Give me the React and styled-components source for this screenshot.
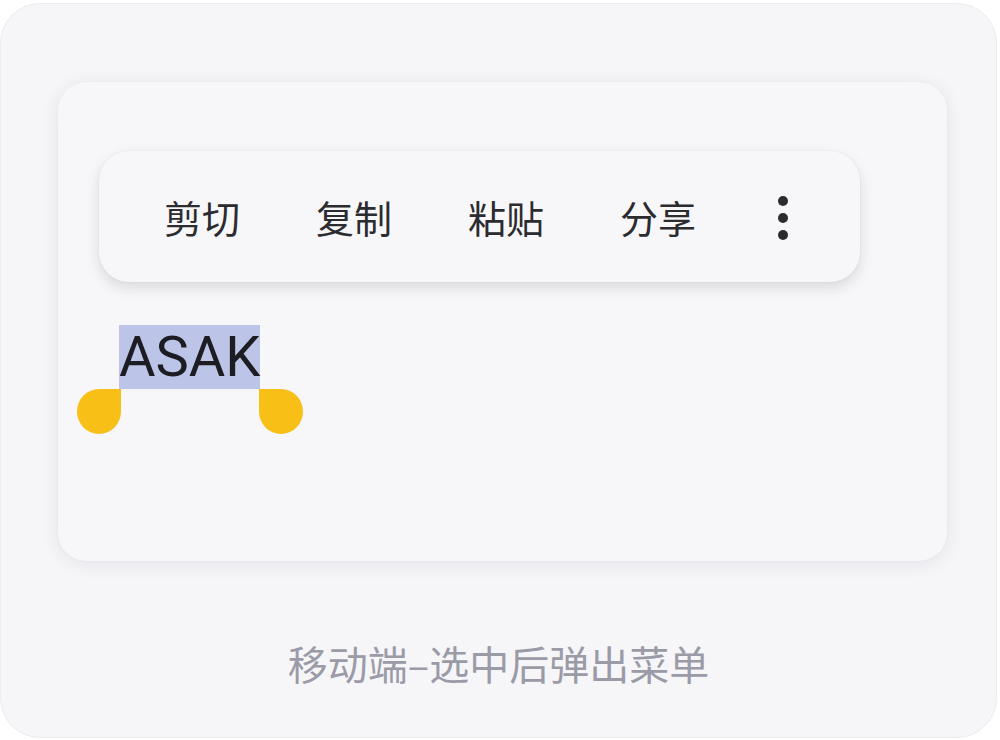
import React from 'react';
import styled, { createGlobalStyle } from 'styled-components';

const GlobalStyle = createGlobalStyle`
    html, body {
        margin: 0;
        padding: 0;
        background: #ffffff;
    }
    body {
        font-family: "Noto Sans", "Noto Sans CJK SC", sans-serif;
    }
`;

const Frame = styled.div`
    box-sizing: border-box;
    width: 997px;
    height: 735px;
    margin: 3px 3px 2px 0;
    padding: 78px 0 0 57px;
    border: 1px solid #ececf0;
    border-radius: 40px;
    background: #f6f6f9;
    display: flex;
    flex-direction: column;
`;

const Card = styled.div`
    box-sizing: border-box;
    width: 889px;
    height: 479px;
    padding: 69px 0 0 41px;
    border-radius: 28px;
    background: #f7f7f9;
    box-shadow: 0 3px 18px rgba(40, 40, 70, 0.09), 0 0 2px rgba(40, 40, 70, 0.05);
`;

const Menu = styled.div`
    box-sizing: border-box;
    width: 761px;
    height: 131px;
    padding-left: 65px;
    display: flex;
    align-items: center;
    gap: 76px;
    border-radius: 30px;
    background: #f7f7f9;
    box-shadow: 0 6px 14px rgba(30, 30, 50, 0.13), 0 0 2px rgba(30, 30, 50, 0.08);
`;

const MenuItem = styled.span`
    font-family: "Noto Sans CJK SC", sans-serif;
    font-size: 38px;
    line-height: 1;
    color: #2b2b30;
`;

const More = styled.span`
    display: flex;
    flex-direction: column;
    gap: 7px;
    margin: 2px 0 0 6px;
`;

const Dot = styled.i`
    display: block;
    width: 10px;
    height: 10px;
    border-radius: 50%;
    background: #2b2b30;
`;

const Selection = styled.span`
    position: relative;
    display: inline-block;
    margin: 43px 0 0 20px;
    height: 64px;
    background: #bcc4e8;
    font-family: Roboto, "Liberation Sans", sans-serif;
    font-size: 56px;
    line-height: 64px;
    color: #1c1c22;
`;

const Handle = styled.span`
    position: absolute;
    top: 100%;
    width: 44px;
    height: 45px;
    background: #f8bf17;
    border-radius: ${p => (p.side === 'left' ? '50% 0 50% 50%' : '0 50% 50% 50%')};
    ${p => (p.side === 'left' ? 'right: 100%; margin-right: -2px;' : 'left: 100%; margin-left: -1px;')}
`;

const Caption = styled.div`
    margin: 77px 0 0 -57px;
    text-align: center;
    font-family: "Noto Sans CJK SC", sans-serif;
    font-size: 40px;
    line-height: 50px;
    color: #9b9ba8;
`;

const items = ['剪切', '复制', '粘贴', '分享'];

export default function App() {
    return (
        <>
            <GlobalStyle />
            <Frame>
                <Card>
                    <Menu>
                        {items.map(label => (
                            <MenuItem key={label}>{label}</MenuItem>
                        ))}
                        <More>
                            <Dot />
                            <Dot />
                            <Dot />
                        </More>
                    </Menu>
                    <Selection>
                        ASAK
                        <Handle side="left" />
                        <Handle side="right" />
                    </Selection>
                </Card>
                <Caption>移动端–选中后弹出菜单</Caption>
            </Frame>
        </>
    );
}
